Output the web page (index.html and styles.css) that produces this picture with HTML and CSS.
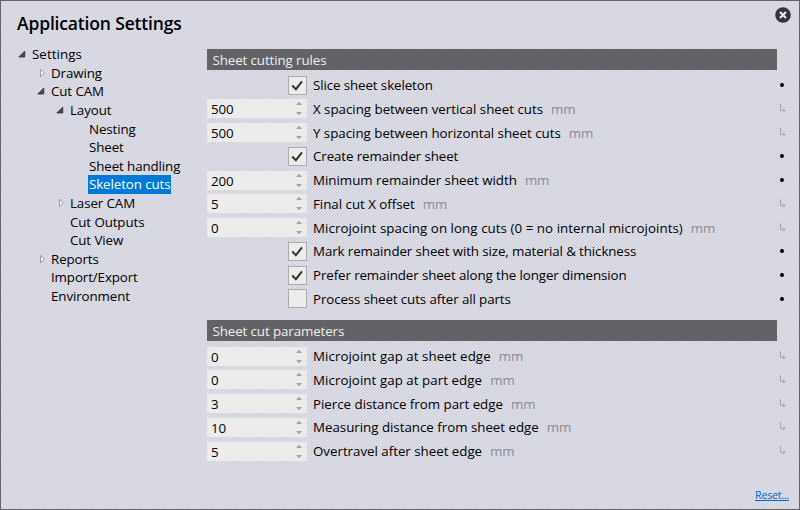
FILE: index.html
```
<!DOCTYPE html>
<html lang="en">
<head>
<meta charset="utf-8">
<title>Application Settings</title>
<link rel="stylesheet" href="styles.css">
</head>
<body>
<svg class="defs" aria-hidden="true">
  <symbol id="open" viewBox="0 0 8 8"><path d="M6.8 1v6H.8z" fill="#4a4a50" stroke="#26262a" stroke-width=".7"/></symbol>
  <symbol id="closed" viewBox="0 0 8 8"><path d="M.5.3v7.4L4.3 4z" fill="#fff" stroke="#909096" stroke-width=".9"/></symbol>
  <symbol id="check" viewBox="0 0 17 17"><path d="M3.2 8.5l3.7 3.7L13 4.3" fill="none" stroke="#303033" stroke-width="1.9"/></symbol>
  <symbol id="spin" viewBox="0 0 6 19"><path d="M0 6l3-3.3L6 6zM0 13h6l-3 3.3z" fill="#a3a3a3"/></symbol>
  <symbol id="hook" viewBox="0 0 7 10"><path d="M1.5 0v6.5H6M4 4.5l2 2-2 2" fill="none" stroke="#a2a2a8"/></symbol>
</svg>
<div class="window">
  <header class="top">
    <h1>Application Settings</h1>
    <svg class="close" viewBox="0 0 16 16"><circle cx="8" cy="8" r="7.8" fill="#353539"/><path d="M5 5l6 6M11 5l-6 6" stroke="#eeeef4" stroke-width="2.1"/></svg>
  </header>
  <div class="main">
    <nav class="tree">
      <div class="node l0"><svg><use href="#open"/></svg><span>Settings</span></div>
      <div class="node l1"><svg><use href="#closed"/></svg><span>Drawing</span></div>
      <div class="node l1"><svg><use href="#open"/></svg><span>Cut CAM</span></div>
      <div class="node l2"><svg><use href="#open"/></svg><span>Layout</span></div>
      <div class="node l3"><svg></svg><span>Nesting</span></div>
      <div class="node l3"><svg></svg><span>Sheet</span></div>
      <div class="node l3"><svg></svg><span>Sheet handling</span></div>
      <div class="node l3 selected"><svg></svg><span>Skeleton cuts</span></div>
      <div class="node l2"><svg><use href="#closed"/></svg><span>Laser CAM</span></div>
      <div class="node l2"><svg></svg><span>Cut Outputs</span></div>
      <div class="node l2"><svg></svg><span>Cut View</span></div>
      <div class="node l1"><svg><use href="#closed"/></svg><span>Reports</span></div>
      <div class="node l1"><svg></svg><span>Import/Export</span></div>
      <div class="node l1"><svg></svg><span>Environment</span></div>
    </nav>
    <div class="panel">
      <h2>Sheet cutting rules</h2>
      <div class="rows">
        <div class="row"><div class="check"><svg><use href="#check"/></svg></div><label>Slice sheet skeleton</label><i class="dot"></i></div>
        <div class="row"><div class="field">500<svg><use href="#spin"/></svg></div><label>X spacing between vertical sheet cuts</label><em>mm</em><svg class="hook"><use href="#hook"/></svg></div>
        <div class="row"><div class="field">500<svg><use href="#spin"/></svg></div><label>Y spacing between horizontal sheet cuts</label><em>mm</em><svg class="hook"><use href="#hook"/></svg></div>
        <div class="row"><div class="check"><svg><use href="#check"/></svg></div><label>Create remainder sheet</label><i class="dot"></i></div>
        <div class="row"><div class="field">200<svg><use href="#spin"/></svg></div><label>Minimum remainder sheet width</label><em>mm</em><i class="dot"></i></div>
        <div class="row"><div class="field">5<svg><use href="#spin"/></svg></div><label>Final cut X offset</label><em>mm</em><svg class="hook"><use href="#hook"/></svg></div>
        <div class="row"><div class="field">0<svg><use href="#spin"/></svg></div><label class="wide">Microjoint spacing on long cuts (0 = no internal microjoints)</label><em>mm</em><svg class="hook"><use href="#hook"/></svg></div>
        <div class="row"><div class="check"><svg><use href="#check"/></svg></div><label>Mark remainder sheet with size, material &amp; thickness</label><i class="dot"></i></div>
        <div class="row"><div class="check"><svg><use href="#check"/></svg></div><label>Prefer remainder sheet along the longer dimension</label><i class="dot"></i></div>
        <div class="row"><div class="check"></div><label>Process sheet cuts after all parts</label><i class="dot"></i></div>
      </div>
      <h2>Sheet cut parameters</h2>
      <div class="rows">
        <div class="row"><div class="field">0<svg><use href="#spin"/></svg></div><label class="wide">Microjoint gap at sheet edge</label><em>mm</em><svg class="hook"><use href="#hook"/></svg></div>
        <div class="row"><div class="field">0<svg><use href="#spin"/></svg></div><label class="wide">Microjoint gap at part edge</label><em>mm</em><svg class="hook"><use href="#hook"/></svg></div>
        <div class="row"><div class="field">3<svg><use href="#spin"/></svg></div><label>Pierce distance from part edge</label><em>mm</em><svg class="hook"><use href="#hook"/></svg></div>
        <div class="row"><div class="field">10<svg><use href="#spin"/></svg></div><label>Measuring distance from sheet edge</label><em>mm</em><svg class="hook"><use href="#hook"/></svg></div>
        <div class="row"><div class="field">5<svg><use href="#spin"/></svg></div><label>Overtravel after sheet edge</label><em>mm</em><svg class="hook"><use href="#hook"/></svg></div>
      </div>
    </div>
  </div>
  <footer><a href="#">Reset...</a></footer>
</div>
</body>
</html>
```

FILE: styles.css
```
* { box-sizing: border-box; }
body { margin: 0; font-family: "Open Sans", "Noto Sans", sans-serif; font-size: 13.33px; letter-spacing: -0.1px; color: #000; }
.defs { display: none; }
.window {
  width: 800px; height: 510px; border: 1px solid #626267; overflow: hidden;
  display: flex; flex-direction: column;
  background: linear-gradient(135deg, #e7e8ec 25%, #d2d3df 25%, #d2d3df 41.67%, #cdcddc 41.67%, #cdcddc 58.33%, #e7e8ec 58.33%, #e7e8ec 75%, #d2d3df 75%) 0 0 / 3px 3px;
}
.top { height: 44px; flex: none; display: flex; justify-content: space-between; padding: 6px 8px 0 16px; }
h1 { margin: 4px 0 0; font-size: 17.5px; line-height: 25px; font-weight: 600; letter-spacing: -0.16px; }
.close { width: 16px; height: 16px; }
.main { display: flex; flex: 1; min-height: 0; padding-left: 16px; }
.tree { width: 190px; flex: none; }
.node { height: 18.6px; display: flex; align-items: center; line-height: 18px; white-space: nowrap; }
.node svg { width: 8px; height: 8px; flex: none; margin: 0 6px 0 1px; }
.node span { padding-right: 1px; }
.l0 span { letter-spacing: 0.06px; }
.l1 { padding-left: 19px; }
.l1 svg { margin-left: 4px; margin-right: 3px; }
.l1 svg:has(use[href="#open"]), .l2 svg:has(use[href="#open"]) { margin: 0 6px 0 1px; }
.l2 { padding-left: 38px; }
.l2 svg { margin-left: 4px; margin-right: 3px; }
.l3 { padding-left: 57px; }
.selected svg { margin-right: 5px; }
.selected span { background: #0078d7; color: #fff; padding-left: 1px; height: 19px; }
.panel { flex: 1; padding-top: 4px; }
h2 { width: 570px; height: 21px; margin: 0; padding-left: 5.5px; background: #626267; color: #f0f0f2; font-size: 13.33px; font-weight: 400; line-height: 23px; }
.rows { padding-top: 3.15px; height: 250px; }
.rows:last-child { height: auto; }
.row { height: 23.75px; width: 581px; display: flex; align-items: center; line-height: 19px; white-space: nowrap; }
.field { width: 100px; height: 19px; background: #ececec; padding: 0 5px 0 4px; display: flex; justify-content: space-between; line-height: 20px; }
.field svg { width: 6px; height: 19px; }
.check { width: 19px; height: 19px; margin-left: 81px; border: 1px solid #acacac; background: #ececec; }
.check svg { width: 17px; height: 17px; display: block; }
label, em { padding-top: 1px; }
label { margin-left: 6px; }
.field + label { letter-spacing: -0.02px; }
.field + label.wide { letter-spacing: 0.05px; }
em { font-style: normal; color: #8b8b91; margin-left: 8px; }
.dot { width: 3.8px; height: 3.8px; border-radius: 50%; background: #000; margin-left: auto; margin-right: 4px; }
.hook { width: 7px; height: 10px; margin-left: auto; margin-right: 2px; }
footer { height: 23px; flex: none; padding: 0 10px; text-align: right; font-size: 10.7px; line-height: 18px; letter-spacing: -0.25px; }
a { color: #0066cc; }
```
